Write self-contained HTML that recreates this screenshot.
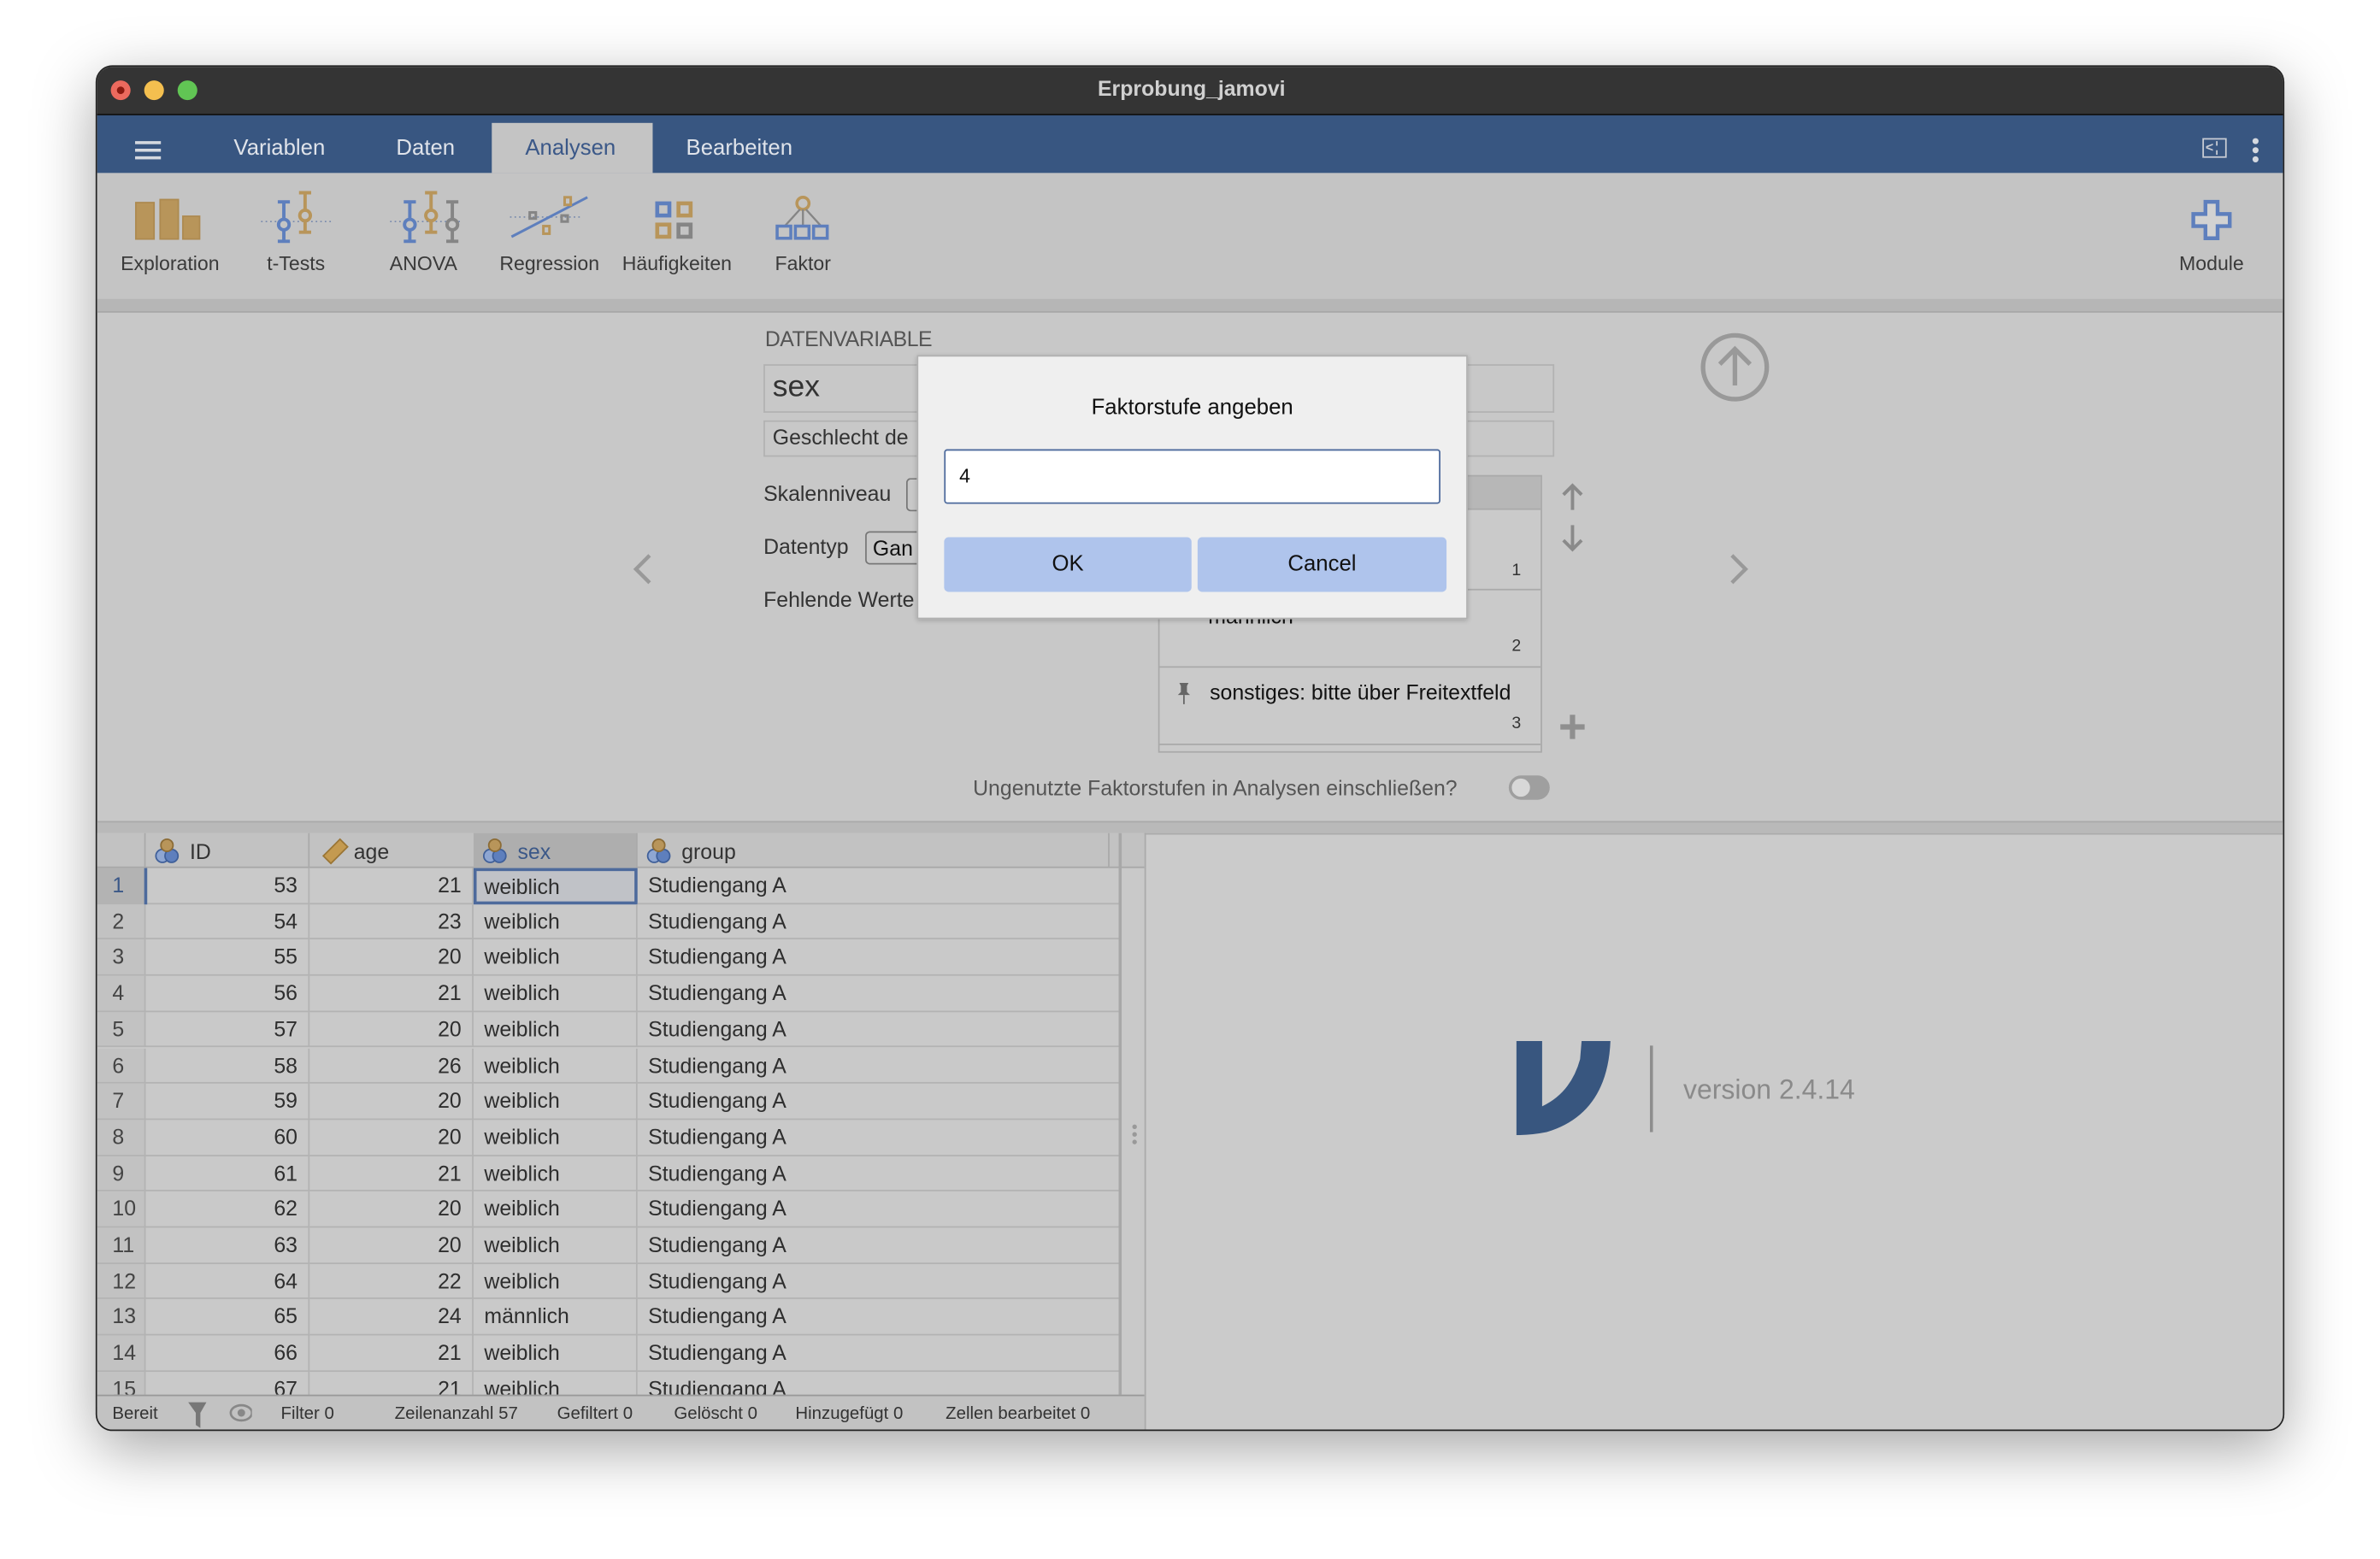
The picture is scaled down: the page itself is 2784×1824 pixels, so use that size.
<!DOCTYPE html>
<html><head><meta charset="utf-8"><style>
*{box-sizing:border-box;margin:0;padding:0}
html,body{width:2784px;height:1824px;overflow:hidden;background:#fff}
#s{position:absolute;left:0;top:0;width:1568px;height:1027px;transform:scale(1.77551);transform-origin:0 0;font-family:"Liberation Sans",Arial,sans-serif;color:#333}
.a{position:absolute}
.win{left:63px;top:43px;width:1442px;height:900px;border-radius:11px;overflow:hidden;background:#c8c8c8;box-shadow:0 12px 40px rgba(0,0,0,.35);border:1px solid #222}
.tab{top:34px;height:38px;line-height:40px;font-size:14.5px;color:#dfe3ea}
.tl{font-size:13px;color:#3a3a3a;text-align:center;width:90px;top:122px}
.cell{position:absolute;height:23.7px;line-height:23px;font-size:14px;color:#2e2e2e;border-right:1px solid #b3b3b3;border-bottom:1px solid #b3b3b3;white-space:nowrap;overflow:hidden}
.st{top:882px;font-size:11.5px;color:#333}
</style></head><body><div id="s">
<div class="a win">
 <div class="a" style="left:0;top:0;width:1442px;height:32px;background:#343434;border-bottom:1px solid #111"></div>
 <div class="a" style="left:9px;top:9px;width:13px;height:13px;border-radius:50%;background:#ec6a5e"><div class="a" style="left:4px;top:4px;width:5px;height:5px;border-radius:50%;background:#8c1a10"></div></div>
 <div class="a" style="left:31px;top:9px;width:13px;height:13px;border-radius:50%;background:#f4bf4f"></div>
 <div class="a" style="left:53px;top:9px;width:13px;height:13px;border-radius:50%;background:#61c554"></div>
 <div class="a" style="left:0;top:6px;width:1442px;text-align:center;font-size:14px;font-weight:bold;color:#d0d0d0">Erprobung_jamovi</div>
 <div class="a" style="left:0;top:32px;width:1442px;height:38px;background:#385681"></div>
 <div class="a" style="left:25px;top:49px;width:17px;height:2px;background:#d5d9e0;box-shadow:0 5px 0 #d5d9e0,0 10px 0 #d5d9e0"></div>
 <div class="a tab" style="left:90px">Variablen</div>
 <div class="a tab" style="left:197px">Daten</div>
 <div class="a" style="left:260px;top:37px;width:106px;height:33px;background:#c4c4c4"></div>
 <div class="a tab" style="left:282px;color:#3b5888">Analysen</div>
 <div class="a tab" style="left:388px">Bearbeiten</div>
 <div class="a" style="left:1387px;top:47px;width:16px;height:13px;border:1.3px solid #c8ccd4"><div class="a" style="left:1px;top:0;font-size:9px;line-height:10px;color:#c8ccd4;font-weight:bold">&lt;</div><div class="a" style="left:8px;top:1px;width:1px;height:9px;border-left:1px dashed #c8ccd4"></div></div>
 <div class="a" style="left:1420px;top:47px;width:4px;height:4px;border-radius:50%;background:#d5d9e0;box-shadow:0 6px 0 #d5d9e0,0 12px 0 #d5d9e0"></div>
 <div class="a" style="left:0;top:70px;width:1442px;height:83px;background:#c4c4c4"></div>
 <svg class="a" style="left:0;top:70px" width="260" height="50">
  <g fill="#b8955a" stroke="#ad8a50"><rect x="25.5" y="19.5" width="12" height="24"/><rect x="41.5" y="17.5" width="12" height="26"/><rect x="56.5" y="28.5" width="11" height="15"/></g>
  <g stroke-dasharray="1 2" stroke="#6a7fa8" stroke-width=".8"><line x1="108" y1="32" x2="155" y2="32"/><line x1="193" y1="32" x2="240" y2="32"/></g>
  <g fill="none" stroke-width="2.2">
   <g stroke="#5e7fbd"><path d="M123 19v26M119 19h8M119 45h8"/><circle cx="123" cy="34" r="3.5" fill="#c4c4c4"/><path d="M206 19v26M202 19h8M202 45h8"/><circle cx="206" cy="34" r="3.5" fill="#c4c4c4"/></g>
   <g stroke="#b8955a"><path d="M137 13v26M133 13h8M133 39h8"/><circle cx="137" cy="28" r="3.5" fill="#c4c4c4"/><path d="M220 13v26M216 13h8M216 39h8"/><circle cx="220" cy="28" r="3.5" fill="#c4c4c4"/></g>
   <g stroke="#858585"><path d="M234 19v26M230 19h8M230 45h8"/><circle cx="234" cy="34" r="3.5" fill="#c4c4c4"/></g>
  </g>
 </svg>
 <svg class="a" style="left:270px;top:83px" width="60" height="30"><line x1="2" y1="16" x2="50" y2="16" stroke="#6a7fa8" stroke-width=".8" stroke-dasharray="1 2"/><path d="M3 29L53 3" stroke="#5e7fbd" stroke-width="1.7"/><g fill="none" stroke-width="1.7"><rect x="38" y="3" width="4" height="5" stroke="#b8955a"/><rect x="24" y="22" width="4" height="5" stroke="#b8955a"/><rect x="15" y="13" width="4" height="4" stroke="#858585"/><rect x="36" y="15" width="4" height="4" stroke="#858585"/></g></svg>
 <svg class="a" style="left:367px;top:88px" width="30" height="30" fill="none" stroke-width="2.6"><rect x="2" y="2" width="8" height="8" stroke="#5e7fbd"/><rect x="16" y="2" width="8" height="8" stroke="#b8955a"/><rect x="2" y="16" width="8" height="8" stroke="#b8955a"/><rect x="16" y="16" width="8" height="8" stroke="#858585"/></svg>
 <svg class="a" style="left:446px;top:84px" width="40" height="32" fill="none"><circle cx="19" cy="6" r="4" stroke="#b8955a" stroke-width="2"/><path d="M17 10L7 21M19 10v11M21 10l10 11" stroke="#858585" stroke-width="1.3"/><g stroke="#5e7fbd" stroke-width="2"><rect x="2" y="21" width="9" height="8"/><rect x="14" y="21" width="9" height="8"/><rect x="26" y="21" width="9" height="8"/></g></svg>
 <svg class="a" style="left:1379px;top:87px" width="30" height="30"><path d="M10 2h8v8h8v8h-8v8h-8v-8H2v-8h8z" fill="#d2d2d2" stroke="#5e7fbd" stroke-width="2.5"/></svg>
 <div class="a tl" style="left:3px">Exploration</div>
 <div class="a tl" style="left:86px">t-Tests</div>
 <div class="a tl" style="left:170px">ANOVA</div>
 <div class="a tl" style="left:253px">Regression</div>
 <div class="a tl" style="left:337px">Häufigkeiten</div>
 <div class="a tl" style="left:420px">Faktor</div>
 <div class="a tl" style="left:1348px">Module</div>
 <div class="a" style="left:0;top:153px;width:1442px;height:9px;background:#b6b6b6;border-bottom:1px solid #a8a8a8"></div>
 <div class="a" style="left:440px;top:171px;font-size:14px;color:#555;letter-spacing:-.3px">DATENVARIABLE</div>
 <div class="a" style="left:439px;top:196px;width:521px;height:32px;border:1.5px solid #b2b2b2"></div>
 <div class="a" style="left:445px;top:200px;font-size:20px;color:#333">sex</div>
 <div class="a" style="left:439px;top:233px;width:521px;height:24px;border:1.5px solid #b2b2b2"></div>
 <div class="a" style="left:445px;top:236px;font-size:14px;color:#333">Geschlecht de</div>
 <div class="a" style="left:439px;top:273px;font-size:14px">Skalenniveau</div>
 <div class="a" style="left:533px;top:271px;width:10px;height:22px;border:1px solid #777;border-right:none;border-radius:3px 0 0 3px"></div>
 <div class="a" style="left:439px;top:308px;font-size:14px">Datentyp</div>
 <div class="a" style="left:506px;top:306px;width:40px;height:22px;border:1px solid #777;border-right:none;border-radius:3px 0 0 3px;font-size:14px;padding:2px 4px;color:#111">Gan</div>
 <div class="a" style="left:439px;top:343px;font-size:14px">Fehlende Werte</div>
 <div class="a" style="left:548px;top:362px;width:115px;height:2px;background:#bdbdbd"></div>
 <div class="a" style="left:699px;top:269px;width:253px;height:183px;border:1.5px solid #aaa;background:#cacaca"></div>
 <div class="a" style="left:700px;top:270px;width:251px;height:22px;background:#b7b7b7;border-bottom:1px solid #aaa"></div>
 <div class="a" style="left:700px;top:344px;width:251px;height:1px;background:#aaa"></div>
 <div class="a" style="left:700px;top:395px;width:251px;height:1px;background:#aaa"></div>
 <div class="a" style="left:700px;top:446px;width:251px;height:1px;background:#aaa"></div>
 <div class="a" style="left:932px;top:326px;font-size:11px">1</div>
 <div class="a" style="left:732px;top:354px;font-size:14px;color:#111">männlich</div>
 <div class="a" style="left:932px;top:376px;font-size:11px">2</div>
 <svg class="a" style="left:711px;top:405px" width="10" height="16"><path d="M2 1h6l-1 2v4l2 2H1l2-2V3z" fill="#666"/><path d="M5 9v6" stroke="#666" stroke-width="1"/></svg>
 <div class="a" style="left:733px;top:404px;font-size:14px;color:#111">sonstiges: bitte über Freitextfeld</div>
 <div class="a" style="left:932px;top:427px;font-size:11px">3</div>
 <svg class="a" style="left:962px;top:273px" width="20" height="60" fill="none" stroke="#8a8a8a" stroke-width="2.2"><path d="M10 3v16M4 9l6-6 6 6M10 29v16M4 39l6 6 6-6"/></svg>
 <svg class="a" style="left:963px;top:426px" width="18" height="18"><path d="M9 1v16M1 9h16" stroke="#8f8f8f" stroke-width="3.5"/></svg>
 <svg class="a" style="left:1055px;top:175px" width="50" height="50" fill="none" stroke="#999" stroke-width="3"><circle cx="24" cy="23" r="21"/><path d="M24 35V12M14 21l10-10 10 10"/></svg>
 <svg class="a" style="left:350px;top:320px" width="20" height="24" fill="none" stroke="#999" stroke-width="2.5"><path d="M14 2L5 11l9 9"/></svg>
 <svg class="a" style="left:1072px;top:320px" width="20" height="24" fill="none" stroke="#999" stroke-width="2.5"><path d="M5 2l9 9-9 9"/></svg>
 <div class="a" style="left:577px;top:467px;font-size:14px;color:#555">Ungenutzte Faktorstufen in Analysen einschließen?</div>
 <div class="a" style="left:930px;top:467px;width:27px;height:16px;border-radius:8px;background:#9f9f9f"><div class="a" style="left:2px;top:2px;width:12px;height:12px;border-radius:50%;background:#d8d8d8"></div></div>
 <div class="a" style="left:0;top:497px;width:1442px;height:8px;background:#b9b9b9;border-top:1px solid #aaa"></div>
 <div class="a" style="left:0;top:505px;width:690px;height:370px;background:#c9c9c9"></div>
 <div class="a" style="left:0;top:505px;width:690px;height:23px;background:#c2c2c2;border-bottom:1px solid #a8a8a8"></div>
 <div class="a" style="left:248px;top:505px;width:108px;height:23px;background:#aeaeae"></div>
 <div id="grid"></div>
 <div class="a" style="left:673px;top:505px;width:1.5px;height:370px;background:#a8a8a8"></div>
 <div class="a" style="left:0;top:875px;width:690px;height:25px;background:#c2c2c2;border-top:1.5px solid #999"></div>
 <div class="a st" style="left:10px">Bereit</div>
 <svg class="a" style="left:58px;top:878px" width="44" height="20"><path d="M2 2h12l-4 7v10l-3-2V9z" fill="#777"/><ellipse cx="37" cy="9" rx="7" ry="5" fill="none" stroke="#888" stroke-width="1.5"/><circle cx="37" cy="9" r="2.5" fill="#888"/></svg>
 <div class="a st" style="left:121px">Filter 0</div>
 <div class="a st" style="left:196px">Zeilenanzahl 57</div>
 <div class="a st" style="left:303px">Gefiltert 0</div>
 <div class="a st" style="left:380px">Gelöscht 0</div>
 <div class="a st" style="left:460px">Hinzugefügt 0</div>
 <div class="a st" style="left:559px">Zellen bearbeitet 0</div>
 <div class="a" style="left:690px;top:505px;width:752px;height:395px;background:#cbcbcb;border-left:1.5px solid #aaa;border-top:1.5px solid #aaa"></div>
 <div class="a" style="left:682px;top:697px;width:3px;height:3px;border-radius:50%;background:#999;box-shadow:0 5px 0 #999,0 10px 0 #999"></div>
 <svg class="a" style="left:935px;top:642px" width="65" height="62"><path d="M0 0h17v43Q36 34 42 12L43 0h19Q60 48 20 60Q10 62 0 62z" fill="#38567f"/></svg>
 <div class="a" style="left:1023px;top:645px;width:2px;height:57px;background:#8e8e8e"></div>
 <div class="a" style="left:1045px;top:664px;font-size:18px;color:#8a8a8a">version 2.4.14</div>
 <div class="a" style="left:540px;top:190px;width:363px;height:174px;background:#efefef;border:1px solid #b0b0b0;box-shadow:0 1px 3px rgba(0,0,0,.2)"></div>
 <div class="a" style="left:540px;top:217px;width:363px;text-align:center;font-size:14.5px;color:#111">Faktorstufe angeben</div>
 <div class="a" style="left:558px;top:252px;width:327px;height:36px;background:#fff;border:1.5px solid #4d6a9c;border-radius:2px;font-size:13px;color:#111;padding:9px 9px">4</div>
 <div class="a" style="left:558px;top:310px;width:163px;height:36px;background:#afc4ec;border-radius:3px;text-align:center;line-height:36px;font-size:14.5px;color:#111">OK</div>
 <div class="a" style="left:725px;top:310px;width:164px;height:36px;background:#afc4ec;border-radius:3px;text-align:center;line-height:36px;font-size:14.5px;color:#111">Cancel</div>
</div>
<script>
var g=document.getElementById('grid'),h='';
var cols=[[0,32],[32,108],[140,108],[248,108],[356,318]];
function ic(x){return '<svg class="a" style="left:'+x+'px;top:508px" width="18" height="18"><circle cx="5" cy="12" r="4.3" fill="#8ea6d2" stroke="#3f5f99"/><circle cx="11" cy="12" r="4.3" fill="#5e7fbd" stroke="#3f5f99"/><circle cx="8" cy="5" r="4" fill="#b8955a" stroke="#8c6c36"/></svg>';}
h+=ic(38)+'<div class="a" style="left:61px;top:509px;font-size:14px">ID</div>';
h+='<svg class="a" style="left:147px;top:506px" width="20" height="20"><path d="M2 14L13 3l5 5L7 19z" fill="#c49a50" stroke="#9a7535"/></svg><div class="a" style="left:169px;top:509px;font-size:14px">age</div>';
h+=ic(254)+'<div class="a" style="left:277px;top:509px;font-size:14px;color:#3b5888">sex</div>';
h+=ic(362)+'<div class="a" style="left:385px;top:509px;font-size:14px">group</div>';
h+='<div class="a" style="left:139px;top:505px;width:1px;height:23px;background:#aaa"></div><div class="a" style="left:31px;top:505px;width:1px;height:23px;background:#aaa"></div><div class="a" style="left:355px;top:505px;width:1px;height:23px;background:#aaa"></div><div class="a" style="left:666px;top:505px;width:1px;height:23px;background:#aaa"></div>';
var ages=[21,23,20,21,20,26,20,20,21,20,20,22,24,21,21];
for(var i=0;i<15;i++){var y=528+i*23.7;
 var v=[String(i+1),String(53+i),String(ages[i]),i==12?'männlich':'weiblich','Studiengang A'];
 for(var c=0;c<5;c++){var st='left:'+cols[c][0]+'px;top:'+y+'px;width:'+cols[c][1]+'px;';
  if(c==0)st+='background:'+(i==0?'#b3b3b3':'#c2c2c2')+';padding-left:10px;color:'+(i==0?'#3b5888':'#444')+';';
  else if(c<3)st+='text-align:right;padding-right:7px;';else st+='padding-left:7px;';
  if(i==0&&c==3)st+='border:2px solid #4d6a9c;background:#c0c2c7;padding-left:5px;line-height:20px;';
  h+='<div class="cell" style="'+st+'">'+v[c]+'</div>';}
}
h+='<div class="a" style="left:31px;top:528px;width:2px;height:24px;background:#4d6a9c"></div>';
g.innerHTML=h;
</script>
</div></body></html>
